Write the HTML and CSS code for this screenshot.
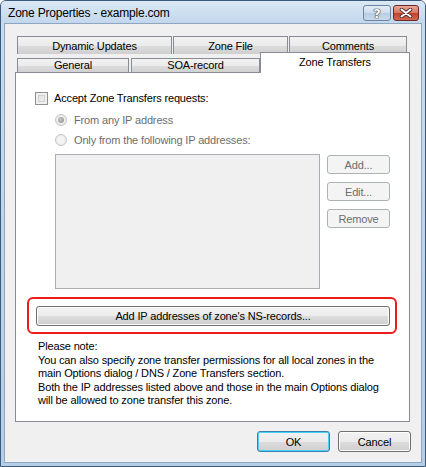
FILE: index.html
```html
<!DOCTYPE html>
<html>
<head>
<meta charset="utf-8">
<link rel="stylesheet" href="styles.css">
</head>
<body>
<div class="window">
  <div class="titlebar">
    <span class="title">Zone Properties - example.com</span>
    <div class="caption-btns">
      <div class="cbtn help"><span>?</span></div>
      <div class="cbtn close">
        <svg width="14" height="10" viewBox="0 0 14 10"><path d="M2.5 1.5 L11.5 8.5 M11.5 1.5 L2.5 8.5" stroke="#4a2a2a" stroke-width="3.6" stroke-linecap="round"/><path d="M2.5 1.5 L11.5 8.5 M11.5 1.5 L2.5 8.5" stroke="#fff" stroke-width="2" stroke-linecap="round"/></svg>
      </div>
    </div>
  </div>
  <div class="client">
    <div class="tabs">
      <div class="tabrow back">
        <div class="tab t-dyn">Dynamic Updates</div>
        <div class="tab t-zf">Zone File</div>
        <div class="tab t-com">Comments</div>
      </div>
      <div class="tabrow front">
        <div class="tab t-gen">General</div>
        <div class="tab t-soa">SOA-record</div>
        <div class="tab t-zt sel">Zone Transfers</div>
      </div>
    </div>
    <div class="panel">
      <label class="check-row"><span class="checkbox"></span>Accept Zone Transfers requests:</label>
      <div class="radio-row r1"><span class="radio on"></span>From any IP address</div>
      <div class="radio-row r2"><span class="radio"></span>Only from the following IP addresses:</div>
      <div class="list-area">
        <div class="listbox"></div>
        <div class="side-btns">
          <div class="btn small">Add...</div>
          <div class="btn small">Edit...</div>
          <div class="btn small">Remove</div>
        </div>
      </div>
      <div class="highlight">
        <div class="btn wide">Add IP addresses of zone's NS-records...</div>
      </div>
      <div class="note">Please note:<br>You can also specify zone transfer permissions for all local zones in the<br>main Options dialog / DNS / Zone Transfers section.<br>Both the IP addresses listed above and those in the main Options dialog<br>will be allowed to zone transfer this zone.</div>
    </div>
    <div class="footer">
      <div class="btn dlg default">OK</div>
      <div class="btn dlg">Cancel</div>
    </div>
  </div>
</div>
</body>
</html>
```
FILE: styles.css
```css
html, body {
  margin: 0;
  padding: 0;
  width: 426px;
  height: 467px;
  overflow: hidden;
  background: #fff;
}
.window {
  box-sizing: border-box;
  width: 426px;
  height: 467px;
  border: 1px solid #3c5a7c;
  border-radius: 6px 6px 0 0;
  background: linear-gradient(#c9dcef, #b6cde6);
  display: flex;
  flex-direction: column;
  padding: 0 3px 3px 3px;
  font-family: "Liberation Sans", Arial, sans-serif;
  font-size: 11px;
  letter-spacing: -0.15px;
  color: #000;
}
.titlebar {
  height: 22px;
  display: flex;
  align-items: center;
  justify-content: space-between;
  background: linear-gradient(#dbe8f5, #c3d7ec);
  margin: 0 -3px;
  padding: 0 6px 0 7px;
  border-radius: 5px 5px 0 0;
}
.title {
  font-size: 12px;
  letter-spacing: -0.2px;
  color: #000;
  padding-top: 1px;
}
.caption-btns {
  display: flex;
  gap: 2px;
  align-self: flex-start;
  margin-top: 4px;
}
.cbtn {
  box-sizing: border-box;
  height: 16px;
  border: 1px solid #6d84a0;
  border-radius: 3px;
  display: flex;
  align-items: center;
  justify-content: center;
}
.help {
  width: 28px;
  background: linear-gradient(#e4edf7 0%, #cddcec 50%, #b8cde3 51%, #c9d9ea 100%);
}
.help span {
  font-family: "DejaVu Sans", sans-serif;
  font-weight: bold;
  font-size: 13px;
  line-height: 13px;
  color: #fff;
  text-shadow: 0 0 1px #333, 0 0 1px #333, 0 0 1px #333;
}
.close {
  width: 26px;
  border-color: #6b2a24;
  background: linear-gradient(#e9a99a 0%, #d9735f 50%, #c2402a 51%, #d46a4f 100%);
}
.client {
  flex: 1;
  background: #f0f0f0;
  border: 1px solid #8ea6c0;
  display: flex;
  flex-direction: column;
  padding: 12px 9px 0 10px;
}
.tabs {
  display: flex;
  flex-direction: column;
}
.tabrow {
  display: flex;
  height: 18px;
}
.tabrow.back {
  margin-bottom: 1px;
}
.tab {
  box-sizing: border-box;
  border: 1px solid #898c95;
  border-bottom: none;
  background: linear-gradient(#f2f2f2 0%, #ebebeb 50%, #dddddd 51%, #cfcfcf 100%);
  display: flex;
  align-items: center;
  justify-content: center;
  margin-right: 1px;
}
.t-dyn { width: 155px; margin-left: 2px; }
.t-zf { width: 115px; }
.t-com { width: 118px; }
.t-gen { width: 112px; margin-left: 2px; margin-right: 2px; padding-bottom: 2px; }
.t-soa { width: 129px; margin-right: 0; padding-bottom: 2px; }
.t-zt {
  width: 150px;
  height: 21px;
  margin-top: -3px;
  background: #fff;
  align-items: flex-start;
  padding-top: 3px;
  position: relative;
  z-index: 2;
  margin-right: 0;
}
.tabrow.front { align-items: flex-end; }
.panel {
  box-sizing: border-box;
  height: 350px;
  background: #fff;
  border: 1px solid #898c95;
  margin-top: -1px;
  padding: 18px 0 0 11px;
  width: 395px;
  position: relative;
  z-index: 1;
}
.check-row {
  display: flex;
  align-items: center;
  height: 14px;
  margin-left: 8px;
}
.checkbox {
  box-sizing: border-box;
  width: 13px;
  height: 13px;
  border: 1px solid #8f8f8f;
  background: linear-gradient(135deg, #dcdcdc, #f6f6f6);
  box-shadow: inset 0 0 0 2px #f0f0f0, inset 0 0 0 3px #d0d0d0;
  margin-right: 6px;
}
.radio-row {
  display: flex;
  align-items: center;
  height: 14px;
  margin-left: 28px;
  color: #6d6d6d;
}
.r1 { margin-top: 8px; }
.r2 { margin-top: 6px; }
.radio {
  box-sizing: border-box;
  width: 12px;
  height: 12px;
  border-radius: 50%;
  border: 1px solid #c4c4c4;
  background: radial-gradient(circle, #f4f4f4 40%, #e2e2e2 100%);
  margin-right: 7px;
  position: relative;
}
.radio.on::after {
  content: "";
  position: absolute;
  left: 2px;
  top: 2px;
  width: 6px;
  height: 6px;
  border-radius: 50%;
  background: radial-gradient(circle at 40% 40%, #c8c8c8, #8a8a8a);
}
.list-area {
  display: flex;
  margin-top: 7px;
  margin-left: 28px;
}
.listbox {
  box-sizing: border-box;
  width: 265px;
  height: 135px;
  background: #f0f0f0;
  border: 1px solid #abadb3;
}
.side-btns {
  display: flex;
  flex-direction: column;
  gap: 8px;
  margin-left: 7px;
  padding-top: 1px;
}
.btn {
  box-sizing: border-box;
  border: 1px solid #707070;
  border-radius: 3px;
  display: flex;
  align-items: center;
  justify-content: center;
  background: linear-gradient(#f2f2f2 0%, #ebebeb 50%, #dddddd 51%, #cfcfcf 100%);
  box-shadow: inset 0 0 0 1px #fcfcfc;
}
.btn.small {
  width: 63px;
  height: 19px;
  color: #6d6d6d;
  border-color: #adb2b5;
  background: #f4f4f4;
  box-shadow: none;
}
.highlight {
  box-sizing: border-box;
  width: 370px;
  height: 37px;
  margin: 8px 0 0 0;
  border: 2px solid #ee1b1b;
  border-radius: 6px;
  padding: 7px 0 0 7px;
}
.btn.wide {
  width: 354px;
  height: 20px;
}
.note {
  margin: 6px 0 0 11px;
  line-height: 13.5px;
  white-space: nowrap;
}
.footer {
  display: flex;
  justify-content: flex-end;
  gap: 8px;
  padding: 9px 1px 0 0;
}
.btn.dlg {
  width: 73px;
  height: 21px;
}
.btn.default {
  border-color: #3c7fb1;
  box-shadow: inset 0 0 0 1px #48d0f8;
}
```
